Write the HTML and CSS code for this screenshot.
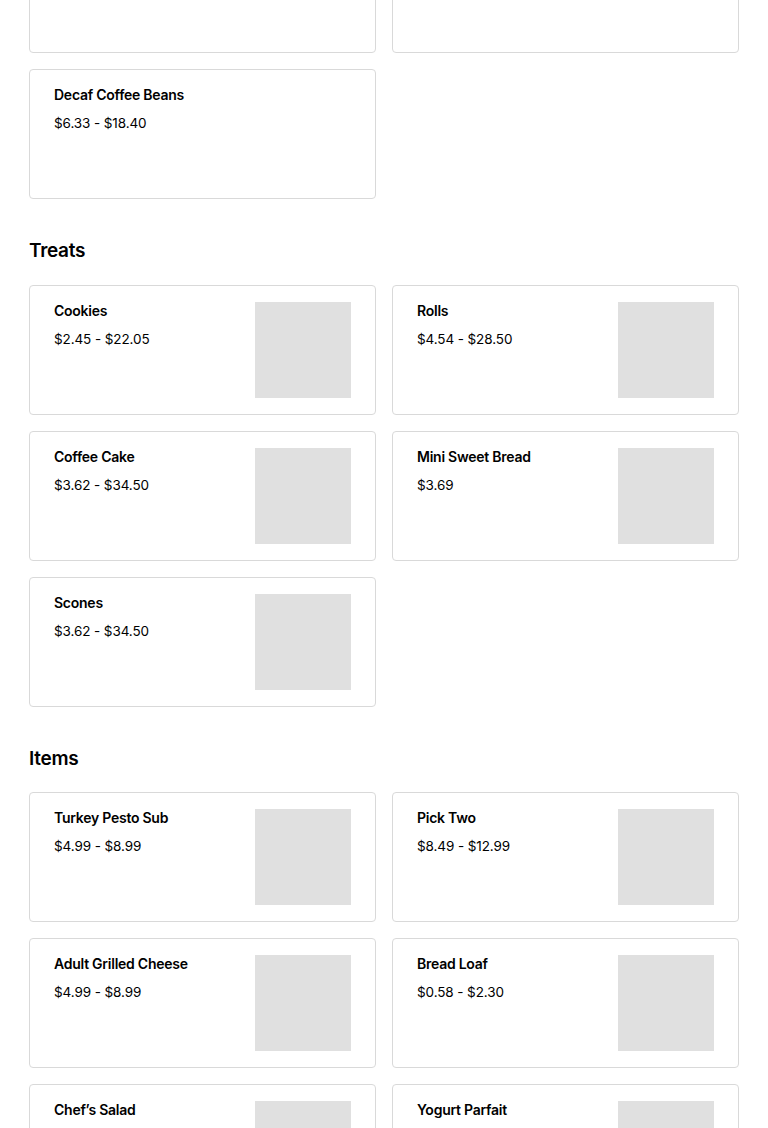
FILE: index.html
```html
<!DOCTYPE html>
<html>
<head>
<meta charset="utf-8">
<link rel="stylesheet" href="styles.css">
</head>
<body>
<main class="page">
  <section class="section first">
    <div class="grid">
      <div class="card"></div>
      <div class="card"></div>
      <div class="card"><div class="info"><div class="name">Decaf Coffee Beans</div><div class="price">$6.33 - $18.40</div></div></div>
    </div>
  </section>
  <section class="section">
    <h2 class="heading">Treats</h2>
    <div class="grid">
      <div class="card"><div class="info"><div class="name">Cookies</div><div class="price">$2.45 - $22.05</div></div><div class="thumb"></div></div>
      <div class="card"><div class="info"><div class="name">Rolls</div><div class="price">$4.54 - $28.50</div></div><div class="thumb"></div></div>
      <div class="card"><div class="info"><div class="name">Coffee Cake</div><div class="price">$3.62 - $34.50</div></div><div class="thumb"></div></div>
      <div class="card"><div class="info"><div class="name">Mini Sweet Bread</div><div class="price">$3.69</div></div><div class="thumb"></div></div>
      <div class="card"><div class="info"><div class="name">Scones</div><div class="price">$3.62 - $34.50</div></div><div class="thumb"></div></div>
    </div>
  </section>
  <section class="section items">
    <h2 class="heading">Items</h2>
    <div class="grid">
      <div class="card"><div class="info"><div class="name">Turkey Pesto Sub</div><div class="price">$4.99 - $8.99</div></div><div class="thumb"></div></div>
      <div class="card"><div class="info"><div class="name">Pick Two</div><div class="price">$8.49 - $12.99</div></div><div class="thumb"></div></div>
      <div class="card"><div class="info"><div class="name">Adult Grilled Cheese</div><div class="price">$4.99 - $8.99</div></div><div class="thumb"></div></div>
      <div class="card"><div class="info"><div class="name">Bread Loaf</div><div class="price">$0.58 - $2.30</div></div><div class="thumb"></div></div>
      <div class="card"><div class="info"><div class="name">Chef’s Salad</div></div><div class="thumb"></div></div>
      <div class="card"><div class="info"><div class="name">Yogurt Parfait</div></div><div class="thumb"></div></div>
    </div>
  </section>
</main>
</body>
</html>
```
FILE: styles.css
```css
html, body {
  margin: 0;
  padding: 0;
  background: #ffffff;
  overflow: hidden;
}
body {
  font-family: "Inter", "Liberation Sans", sans-serif;
  color: #000000;
}
.page {
  padding: 0 29px;
}
.section.first {
  margin-top: -77px;
}
.section {
  margin-top: 40px;
}
.section.items .heading {
  margin-bottom: 21px;
}
.heading {
  margin: 0 0 22px;
  font-size: 19px;
  line-height: 24px;
  font-weight: 600;
  letter-spacing: -0.3px;
}
.grid {
  display: grid;
  grid-template-columns: 347px 347px;
  gap: 16px;
}
.card {
  box-sizing: border-box;
  height: 130px;
  border: 1px solid #d9d9d9;
  border-radius: 4px;
  padding: 16px 24px;
  display: flex;
  justify-content: space-between;
  align-items: flex-start;
}
.name {
  font-size: 14px;
  line-height: 18px;
  font-weight: 600;
  letter-spacing: -0.25px;
}
.price {
  margin-top: 10px;
  font-size: 13.5px;
  line-height: 18px;
  letter-spacing: -0.1px;
}
.thumb {
  width: 96px;
  height: 96px;
  background: #e0e0e0;
  flex-shrink: 0;
}
```
